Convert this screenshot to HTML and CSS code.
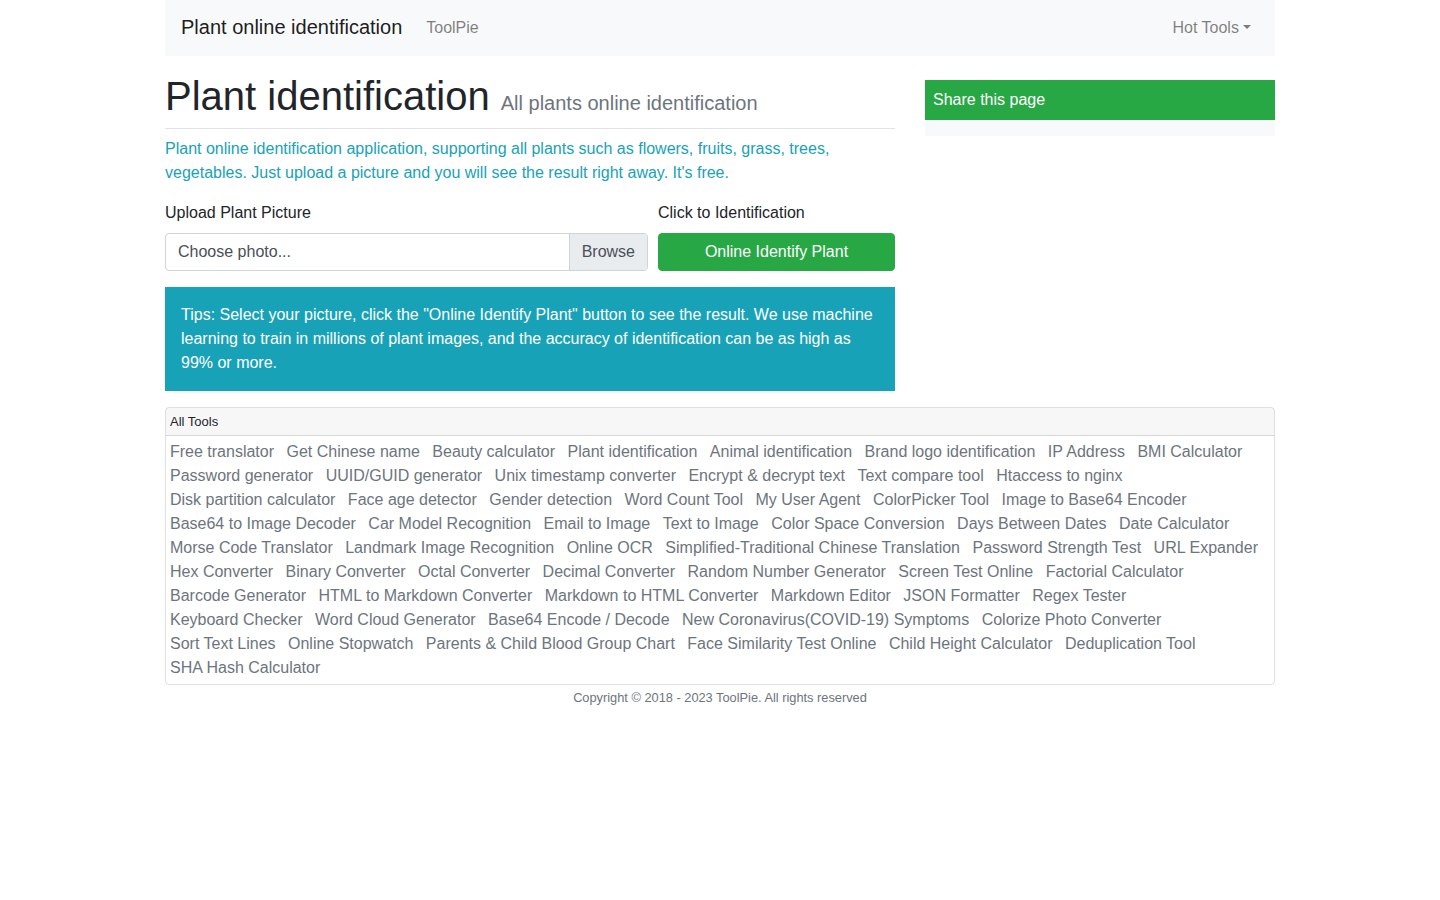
FILE: index.html
```html
<!DOCTYPE html>
<html lang="en">
<head>
    <meta charset="UTF-8">
    <meta name="viewport" content="width=device-width, initial-scale=1.0">
    <title>Plant identification - ToolPie</title>
    <link rel="stylesheet" href="styles.css">
</head>
<body>
    <div class="container">
        <nav class="navbar">
            <a class="brand" href="#">Plant online identification</a>
            <a class="nav-link" href="#">ToolPie</a>
            <a class="nav-link dropdown-toggle hot" href="#">Hot Tools</a>
        </nav>

        <div class="main">
            <div class="content">
                <div class="page-header">
                    <h1>Plant identification <small>All plants online identification</small></h1>
                </div>
                <p class="intro">Plant online identification application, supporting all plants such as flowers, fruits, grass, trees, vegetables. Just upload a picture and you will see the result right away. It's free.</p>

                <div class="form-row">
                    <div class="form-group">
                        <label>Upload Plant Picture</label>
                        <div class="custom-file">
                            <span class="file-label">Choose photo...</span>
                            <span class="file-browse">Browse</span>
                        </div>
                    </div>
                    <div class="form-group">
                        <label>Click to Identification</label>
                        <button type="button" class="btn-success">Online Identify Plant</button>
                    </div>
                </div>

                <div class="alert-info">
                    Tips: Select your picture, click the "Online Identify Plant" button to see the result. We use machine learning to train in millions of plant images, and the accuracy of identification can be as high as 99% or more.
                </div>
            </div>

            <div class="sidebar">
                <div class="share-card">
                    <div class="share-header">Share this page</div>
                    <div class="share-body"></div>
                </div>
            </div>
        </div>

        <div class="card">
            <div class="card-header">All Tools</div>
            <div class="card-body tools">
                <a href="#">Free translator</a> <a href="#">Get Chinese name</a> <a href="#">Beauty calculator</a> <a href="#">Plant identification</a> <a href="#">Animal identification</a> <a href="#">Brand logo identification</a> <a href="#">IP Address</a> <a href="#">BMI Calculator</a>
                <a href="#">Password generator</a> <a href="#">UUID/GUID generator</a> <a href="#">Unix timestamp converter</a> <a href="#">Encrypt &amp; decrypt text</a> <a href="#">Text compare tool</a> <a href="#">Htaccess to nginx</a>
                <a href="#">Disk partition calculator</a> <a href="#">Face age detector</a> <a href="#">Gender detection</a> <a href="#">Word Count Tool</a> <a href="#">My User Agent</a> <a href="#">ColorPicker Tool</a> <a href="#">Image to Base64 Encoder</a>
                <a href="#">Base64 to Image Decoder</a> <a href="#">Car Model Recognition</a> <a href="#">Email to Image</a> <a href="#">Text to Image</a> <a href="#">Color Space Conversion</a> <a href="#">Days Between Dates</a> <a href="#">Date Calculator</a>
                <a href="#">Morse Code Translator</a> <a href="#">Landmark Image Recognition</a> <a href="#">Online OCR</a> <a href="#">Simplified-Traditional Chinese Translation</a> <a href="#">Password Strength Test</a> <a href="#">URL Expander</a>
                <a href="#">Hex Converter</a> <a href="#">Binary Converter</a> <a href="#">Octal Converter</a> <a href="#">Decimal Converter</a> <a href="#">Random Number Generator</a> <a href="#">Screen Test Online</a> <a href="#">Factorial Calculator</a>
                <a href="#">Barcode Generator</a> <a href="#">HTML to Markdown Converter</a> <a href="#">Markdown to HTML Converter</a> <a href="#">Markdown Editor</a> <a href="#">JSON Formatter</a> <a href="#">Regex Tester</a>
                <a href="#">Keyboard Checker</a> <a href="#">Word Cloud Generator</a> <a href="#">Base64 Encode / Decode</a> <a href="#">New Coronavirus(COVID-19) Symptoms</a> <a href="#">Colorize Photo Converter</a>
                <a href="#">Sort Text Lines</a> <a href="#">Online Stopwatch</a> <a href="#">Parents &amp; Child Blood Group Chart</a> <a href="#">Face Similarity Test Online</a> <a href="#">Child Height Calculator</a> <a href="#">Deduplication Tool</a>
                <a href="#">SHA Hash Calculator</a>
            </div>
        </div>

        <footer class="footer">Copyright &copy; 2018 - 2023 ToolPie. All rights reserved</footer>
    </div>
</body>
</html>
```

FILE: styles.css
```css
body {
    font-family: "Liberation Sans", Arial, sans-serif;
    font-size: 16px;
    line-height: 1.5;
    color: #212529;
    background-color: #fff;
    margin: 0;
    padding: 0;
}
a {
    text-decoration: none;
}
.container {
    width: 1110px;
    margin: 0 auto;
    padding: 0 15px;
}
.navbar {
    display: flex;
    align-items: center;
    background-color: #f8f9fa;
    padding: 8px 16px;
}
.brand {
    font-size: 20px;
    line-height: 30px;
    padding: 4px 0 6px;
    margin-right: 16px;
    color: rgba(0,0,0,.9);
}
.nav-link {
    padding: 8px;
    color: rgba(0,0,0,.5);
}
.hot {
    margin-left: auto;
}
.dropdown-toggle::after {
    content: "";
    display: inline-block;
    margin-left: .255em;
    vertical-align: .255em;
    border-top: .3em solid;
    border-right: .3em solid transparent;
    border-left: .3em solid transparent;
}
.main {
    display: grid;
    grid-template-columns: 730px 350px;
    column-gap: 30px;
}
.page-header {
    margin-top: 16px;
    padding-bottom: 8px;
    border-bottom: 1px solid #e2e3e5;
}
h1 {
    font-size: 40px;
    font-weight: 500;
    line-height: 1.2;
    margin: 0;
}
h1 small {
    font-size: 50%;
    font-weight: 400;
    color: #6c757d;
}
.intro {
    color: #17a2b8;
    margin: 8px 0 16px;
}
.form-row {
    display: grid;
    grid-template-columns: 1fr 237px;
    column-gap: 10px;
}
.form-group {
    margin-bottom: 16px;
}
.form-group label {
    display: block;
    margin-bottom: 8px;
}
.custom-file {
    display: flex;
    height: 38px;
    box-sizing: border-box;
    border: 1px solid #ced4da;
    border-radius: 4px;
    color: #495057;
    overflow: hidden;
}
.file-label {
    flex: 1;
    padding: 6px 12px;
}
.file-browse {
    padding: 6px 12px;
    background-color: #e9ecef;
    border-left: 1px solid #ced4da;
}
.btn-success {
    display: block;
    width: 100%;
    height: 38px;
    font-family: inherit;
    font-size: 16px;
    color: #fff;
    background-color: #28a745;
    border: 1px solid #28a745;
    border-radius: 4px;
    cursor: pointer;
}
.alert-info {
    background-color: #17a2b8;
    color: #fff;
    padding: 16px;
    margin-bottom: 16px;
}
.share-card {
    margin-top: 24px;
}
.share-header {
    background-color: #28a745;
    color: #fff;
    padding: 8px;
}
.share-body {
    background-color: #f8f9fa;
    height: 16px;
}
.card {
    border: 1px solid rgba(0,0,0,.125);
    border-radius: 4px;
}
.card-header {
    font-size: 13px;
    padding: 4px 4px 3px;
    background-color: rgba(0,0,0,.03);
    border-bottom: 1px solid rgba(0,0,0,.125);
}
.tools {
    padding: 4px 4px 4px;
}
.tools a {
    display: inline-block;
    margin-right: 8px;
    color: #6c757d;
}
.footer {
    text-align: center;
    font-size: 12.8px;
    color: #6c757d;
    padding: 3px 0;
}
```
